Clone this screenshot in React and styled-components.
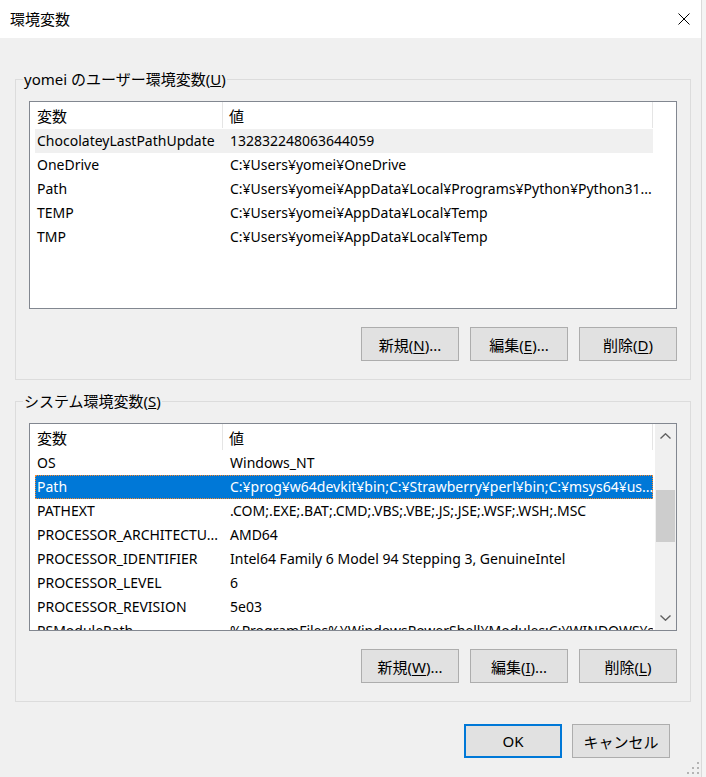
import styled, { createGlobalStyle } from "styled-components";

const userVars = [
  ["ChocolateyLastPathUpdate", "132832248063644059"],
  ["OneDrive", "C:¥Users¥yomei¥OneDrive"],
  ["Path", "C:¥Users¥yomei¥AppData¥Local¥Programs¥Python¥Python31..."],
  ["TEMP", "C:¥Users¥yomei¥AppData¥Local¥Temp"],
  ["TMP", "C:¥Users¥yomei¥AppData¥Local¥Temp"],
];

const systemVars = [
  ["OS", "Windows_NT"],
  ["Path", "C:¥prog¥w64devkit¥bin;C:¥Strawberry¥perl¥bin;C:¥msys64¥us..."],
  ["PATHEXT", ".COM;.EXE;.BAT;.CMD;.VBS;.VBE;.JS;.JSE;.WSF;.WSH;.MSC"],
  ["PROCESSOR_ARCHITECTU...", "AMD64"],
  ["PROCESSOR_IDENTIFIER", "Intel64 Family 6 Model 94 Stepping 3, GenuineIntel"],
  ["PROCESSOR_LEVEL", "6"],
  ["PROCESSOR_REVISION", "5e03"],
  ["PSModulePath", "%ProgramFiles%¥WindowsPowerShell¥Modules;C:¥WINDOWS¥system32"],
];

const GlobalStyle = createGlobalStyle`
  html, body {
    margin: 0;
    padding: 0;
    background: #f4f4f4;
  }

  body {
    font-family: "Noto Sans", "Noto Sans CJK JP", sans-serif;
    font-size: 15px;
    color: #000;
  }
`;

const VarList = ({ rows, hovered, selected, scroll }) => (
  <ListBox>
    <ListMain>
      <HeaderRow>
        <HeaderCell $w={188}>変数</HeaderCell>
        <HeaderCell $w={430} $value>
          値
        </HeaderCell>
      </HeaderRow>
      {rows.map(([name, value], i) => (
        <Row key={name + i} $hover={i === hovered} $selected={i === selected}>
          <NameCell>{name}</NameCell>
          <ValueCell>{value}</ValueCell>
        </Row>
      ))}
    </ListMain>
    {scroll && (
      <ScrollBar>
        <ScrollArrow>
          <svg width="11" height="6" viewBox="0 0 11 6">
            <path d="M0.5 5.5 L5.5 0.8 L10.5 5.5" fill="none" stroke="#606060" strokeWidth="1.4" />
          </svg>
        </ScrollArrow>
        <ScrollTrack>
          <Thumb />
        </ScrollTrack>
        <ScrollArrow>
          <svg width="11" height="6" viewBox="0 0 11 6">
            <path d="M0.5 0.5 L5.5 5.2 L10.5 0.5" fill="none" stroke="#606060" strokeWidth="1.4" />
          </svg>
        </ScrollArrow>
      </ScrollBar>
    )}
  </ListBox>
);

const App = () => (
  <>
    <GlobalStyle />
    <Page>
      <Dialog>
        <TitleBar>
          <Title>環境変数</Title>
          <svg width="12" height="12" viewBox="0 0 12 12">
            <path d="M0.5 0.5 L11.5 11.5 M11.5 0.5 L0.5 11.5" stroke="#000" strokeWidth="1" />
          </svg>
        </TitleBar>

        <Body>
          <Group>
            <Legend>
              yomei のユーザー環境変数(<u>U</u>)
            </Legend>
            <GroupInner>
              <VarList rows={userVars} hovered={0} />
              <ButtonRow>
                <Button>
                  新規(<u>N</u>)...
                </Button>
                <Button>
                  編集(<u>E</u>)...
                </Button>
                <Button>
                  削除(<u>D</u>)
                </Button>
              </ButtonRow>
            </GroupInner>
          </Group>

          <Group $top={11}>
            <Legend>
              システム環境変数(<u>S</u>)
            </Legend>
            <GroupInner>
              <VarList rows={systemVars} selected={1} scroll />
              <ButtonRow>
                <Button>
                  新規(<u>W</u>)...
                </Button>
                <Button>
                  編集(<u>I</u>)...
                </Button>
                <Button>
                  削除(<u>L</u>)
                </Button>
              </ButtonRow>
            </GroupInner>
          </Group>

          <Footer>
            <Button $default>OK</Button>
            <Button>キャンセル</Button>
          </Footer>
        </Body>

        <SizeGrip width="14" height="14" viewBox="0 0 14 14">
          <rect x="11" y="1" width="2" height="2" fill="#b4b4b4" />
          <rect x="6" y="6" width="2" height="2" fill="#b4b4b4" />
          <rect x="11" y="6" width="2" height="2" fill="#b4b4b4" />
          <rect x="1" y="11" width="2" height="2" fill="#b4b4b4" />
          <rect x="6" y="11" width="2" height="2" fill="#b4b4b4" />
          <rect x="11" y="11" width="2" height="2" fill="#b4b4b4" />
        </SizeGrip>
      </Dialog>
    </Page>
  </>
);

const Page = styled.div`
  display: flex;
  width: 706px;
  height: 777px;
  overflow: hidden;
`;

const Dialog = styled.div`
  position: relative;
  display: flex;
  flex-direction: column;
  width: 702px;
  height: 777px;
  background: #f0f0f0;
  border-right: 1px solid #dadada;
  box-sizing: border-box;
`;

const TitleBar = styled.div`
  display: flex;
  align-items: center;
  justify-content: space-between;
  height: 38px;
  padding: 0 11px 0 10px;
  background: #fff;
  flex-shrink: 0;
`;

const Title = styled.span`
  font-size: 15px;
  line-height: 20px;
`;

const Body = styled.div`
  display: flex;
  flex-direction: column;
  padding: 31px 10px 0 15px;
`;

const Group = styled.fieldset`
  margin: ${(p) => p.$top || 0}px 0 0;
  padding: 0;
  border: 1px solid #dcdcdc;
  min-width: 0;
`;

const Legend = styled.legend`
  margin-left: 7px;
  padding: 0 1px;
  line-height: 20px;
  font-size: 15px;
`;

const GroupInner = styled.div`
  display: flex;
  flex-direction: column;
  padding: 12px 13px 18px;
`;

const ListBox = styled.div`
  display: flex;
  height: 208px;
  box-sizing: border-box;
  border: 1px solid #828790;
  background: #fff;
  overflow: hidden;
`;

const ListMain = styled.div`
  flex: 1;
  min-width: 0;
  padding-left: 5px;
`;

const HeaderRow = styled.div`
  display: flex;
  height: 27px;
`;

const HeaderCell = styled.div`
  width: ${(p) => p.$w}px;
  box-sizing: border-box;
  padding: 2px 0 0 ${(p) => (p.$value ? 6 : 2)}px;
  line-height: 24px;
  border-right: 1px solid #e5e5e5;
  margin-bottom: 1px;
`;

const Row = styled.div`
  display: flex;
  width: 618px;
  height: 24px;
  line-height: 24px;
  font-size: 14px;
  white-space: nowrap;
  background: ${(p) => (p.$selected ? "#0078d7" : p.$hover ? "#f0f0f0" : "transparent")};
  color: ${(p) => (p.$selected ? "#fff" : "#000")};
  outline: ${(p) => (p.$selected ? "1px dotted #ff8a2a" : "none")};
  outline-offset: -1px;
`;

const NameCell = styled.div`
  width: 188px;
  padding-left: 2px;
  box-sizing: border-box;
  overflow: hidden;
`;

const ValueCell = styled.div`
  width: 430px;
  padding-left: 7px;
  box-sizing: border-box;
  overflow: hidden;
`;

const ScrollBar = styled.div`
  display: flex;
  flex-direction: column;
  width: 21px;
  background: #f0f0f0;
  flex-shrink: 0;
`;

const ScrollArrow = styled.div`
  display: flex;
  align-items: center;
  justify-content: center;
  height: 24px;
`;

const ScrollTrack = styled.div`
  flex: 1;
`;

const Thumb = styled.div`
  margin: 42px 1px 0;
  height: 52px;
  background: #cdcdcd;
`;

const ButtonRow = styled.div`
  display: flex;
  justify-content: flex-end;
  gap: 11px;
  margin-top: 18px;
`;

const Button = styled.button`
  width: 98px;
  height: 34px;
  box-sizing: border-box;
  padding: 0;
  background: #e1e1e1;
  border: ${(p) => (p.$default ? "2px solid #0078d7" : "1px solid #adadad")};
  font-family: inherit;
  font-size: 15px;
  color: #000;
  text-align: center;

  u {
    text-underline-offset: 2px;
  }
`;

const Footer = styled.div`
  display: flex;
  justify-content: flex-end;
  gap: 10px;
  margin: 22px 21px 0 0;
`;

const SizeGrip = styled.svg`
  position: absolute;
  right: 1px;
  bottom: 2px;
`;

export default App;
